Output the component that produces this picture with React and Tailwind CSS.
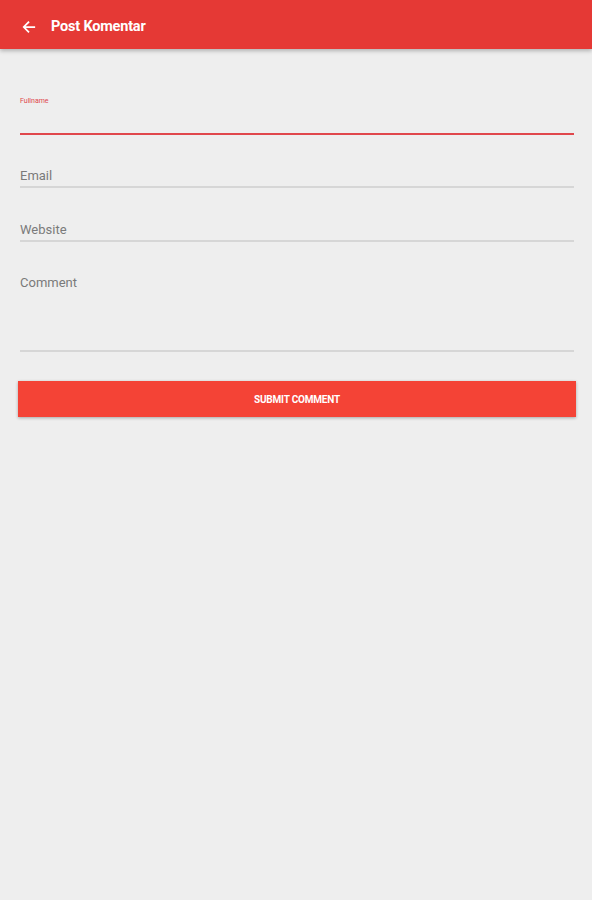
import React from 'react';

const Field = ({ label, className = '' }) => (
  <div className={`border-b-2 border-[#d6d6d6] ${className}`}>
    <span className="block text-[13px] text-[#7a7a7a] leading-none">{label}</span>
  </div>
);

const App = () => {
  return (
    <div className="min-h-[900px] bg-[#eeeeee] font-['Roboto',sans-serif]">
      {/* Toolbar */}
      <div className="h-[49px] bg-[#e53935] flex items-center pt-[4px] shadow-[0_2px_4px_rgba(0,0,0,0.25)]">
        <svg className="ml-[22px] w-[14px] h-[14px]" viewBox="0 0 24 24" fill="none" stroke="white" strokeWidth="3" strokeLinecap="square">
          <path d="M21 12H4M11 4l-8 8 8 8" />
        </svg>
        <h1 className="ml-[15px] text-[14.5px] font-bold text-white tracking-[-0.2px]">Post Komentar</h1>
      </div>

      <div className="pl-[20px] pr-[18px] pt-[49px]">
        {/* Fullname (focused) */}
        <div className="h-[37px] border-b-2 border-[#e0474c]">
          <span className="block text-[7px] text-[#e0474c] leading-none">Fullname</span>
        </div>

        <Field label="Email" className="mt-[34px] pb-[4px]" />
        <Field label="Website" className="mt-[35px] pb-[4px]" />
        <Field label="Comment" className="mt-[34px] h-[76px]" />
      </div>

      <div className="pl-[18px] pr-[16px] mt-[29px]">
        <button className="w-full h-[36px] bg-[#f44336] text-white text-[10px] font-bold uppercase tracking-[-0.2px] shadow-[0_1px_3px_rgba(0,0,0,0.3)]">
          Submit Comment
        </button>
      </div>
    </div>
  );
};

export default App;
